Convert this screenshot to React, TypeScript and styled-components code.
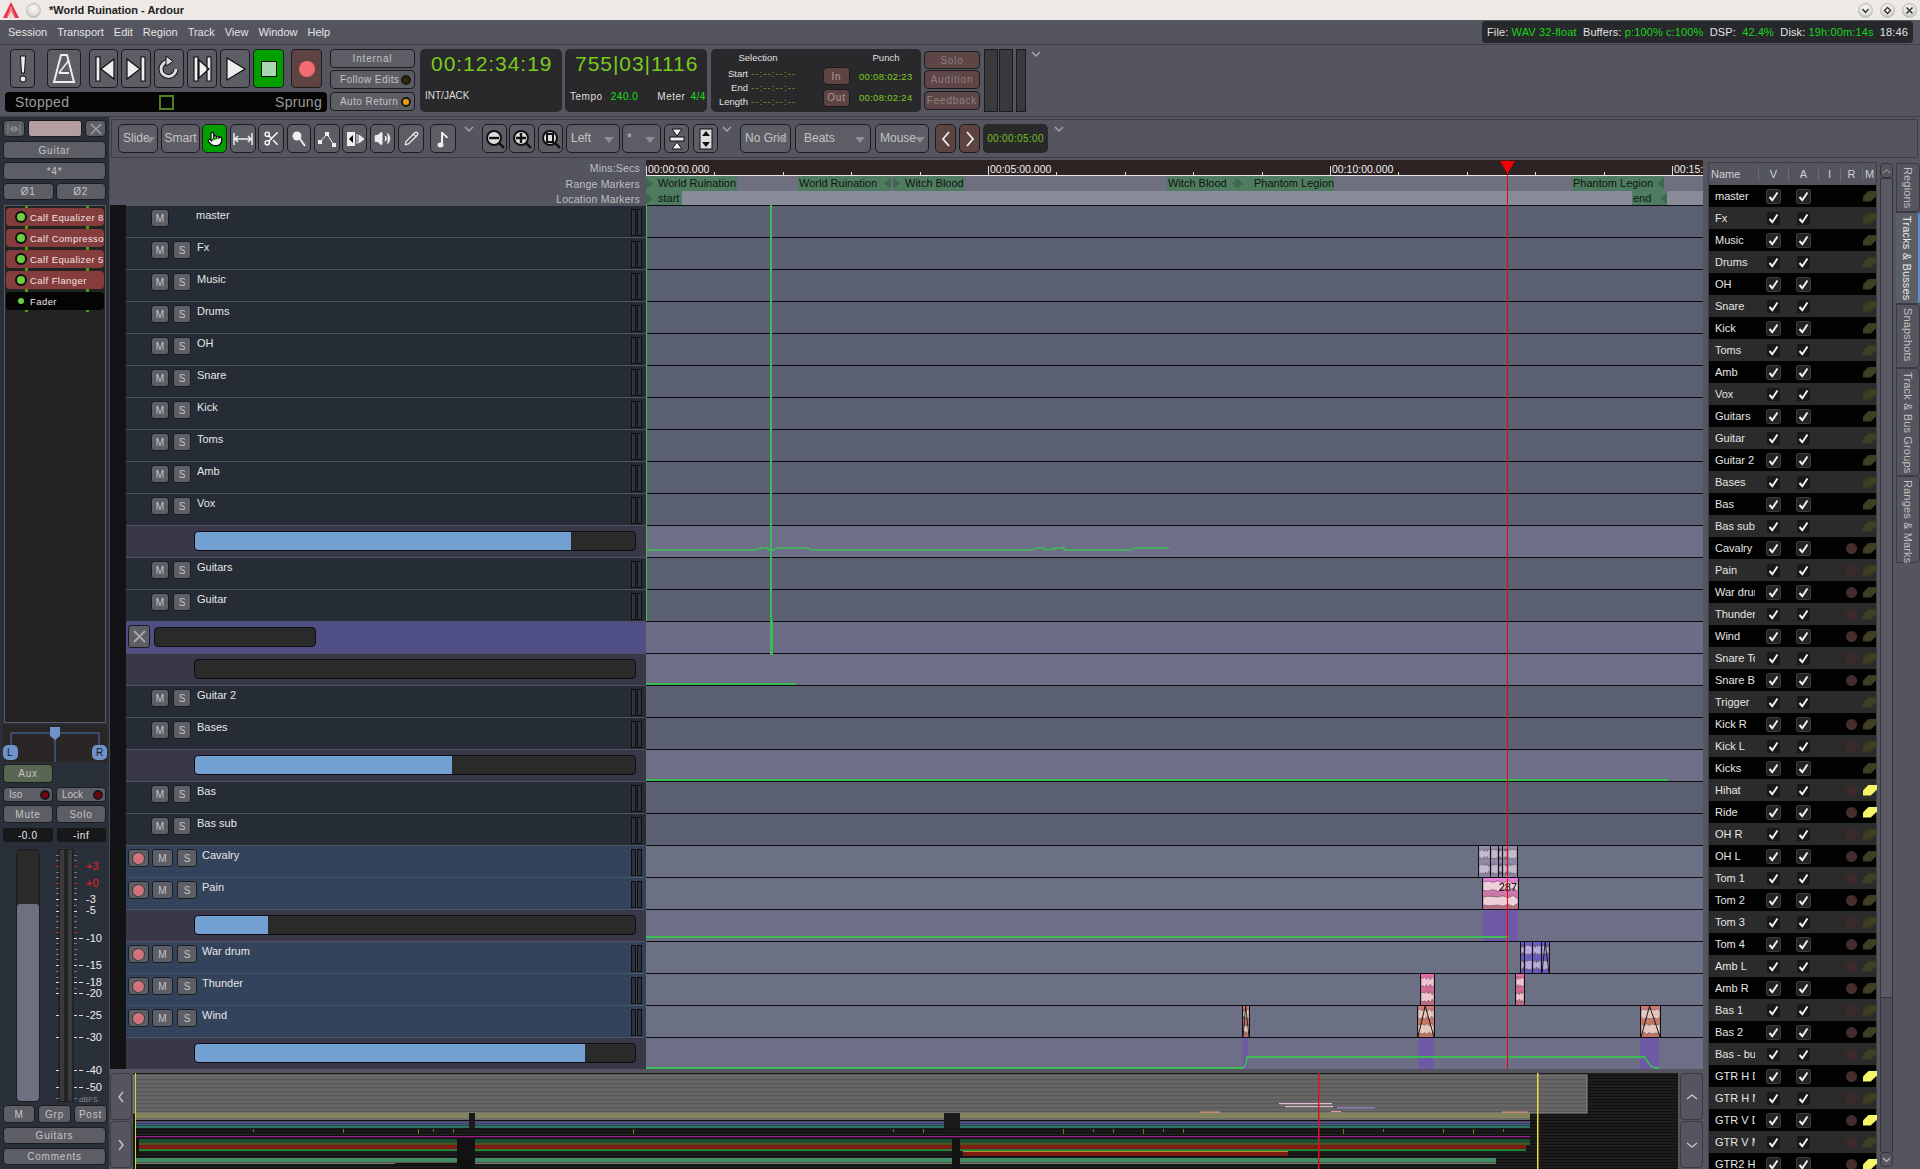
import React from 'react';
import styled, { createGlobalStyle, css } from 'styled-components';
import { Pointer, Scissors, Volume2, Pencil } from 'lucide-react';

const Global = createGlobalStyle`
  html, body { margin: 0; padding: 0; background: #54555f; overflow: hidden; }
  * { box-sizing: border-box; }
  #root { width: 1920px; height: 1169px; }
`;

const Page = styled.div`
  width: 1920px; height: 1169px; overflow: hidden; background: #54555f;
  display: grid; grid-template-rows: 20px 24px 73px 1052px;
  font: 11px/13px "Liberation Sans", Arial, sans-serif; color: #d8d8d8;
`;

/* title bar */
const TitleBar = styled.div`
  background: #ece9e6; display: flex; align-items: center; padding: 0 3px 0 2px; color: #222;
`;
const TitleText = styled.span`font-weight: bold; margin-left: 8px; flex: 1;`;
const WinBtn = styled.span<{ $first?: boolean }>`
  width: 15px; height: 15px; border-radius: 50%; margin-left: ${p => p.$first ? 6 : 7}px; display: flex; align-items: center; justify-content: center;
  background: radial-gradient(circle at 50% 35%, #fafafa 0, #e0dfdc 55%, #a9a8a5 100%); border: 1px solid #bdbcb8;
`;

/* menu */
const MenuBar = styled.div`
  display: flex; align-items: center; padding: 0 7px 0 8px; position: relative; color: #e4e4e4;
  & > span { margin-right: 10px; }
`;
const Status = styled.div`
  margin-left: auto; width: 431px; height: 22px; background: #26282b; border-radius: 4px;
  display: flex; align-items: center; justify-content: space-between; padding: 0 5px; color: #e2e2e2; letter-spacing: .12px;
`;
const Ok = styled.b`font-weight: normal; color: #19d419;`;

/* generic button */
const Btn = styled.div<{ $w?: number; $h?: number; $bg?: string; $c?: string; $ml?: number; $mt?: number }>`
  flex: none;
  ${p => p.$w ? css`width: ${p.$w}px;` : ''}
  height: ${p => p.$h ?? 18}px;
  ${p => p.$ml ? css`margin-left: ${p.$ml}px;` : ''}
  ${p => p.$mt ? css`margin-top: ${p.$mt}px;` : ''}
  background: ${p => p.$bg ?? '#5c5d65'};
  color: ${p => p.$c ?? '#c4c4c4'};
  border: 1px solid #1c1c1f; border-radius: 4px;
  display: flex; align-items: center; justify-content: center;
  font-size: 10px; letter-spacing: .8px; white-space: nowrap;
`;

/* transport */
const Transport = styled.div`
  border-top: 1px solid #3d3e46; border-bottom: 1px solid #3d3e46; display: flex; padding: 4px 0 0 5px; height: 73px;
`;
const TransportCol = styled.div`width: 322px; display: flex; flex-direction: column; gap: 4px;`;
const TransportRow = styled.div`display: flex; gap: 3px; padding-left: 5px; height: 39px;`;
const ButtonStack = styled.div<{ $w: number; $ml: number }>`
  width: ${p => p.$w}px; margin-left: ${p => p.$ml}px; display: flex; flex-direction: column; flex: none;
`;
const LedBtn = styled(Btn)`justify-content: space-between; padding: 0 3px 0 9px; letter-spacing: .45px;`;
const SmallLedBtn = styled(LedBtn)`padding: 0 2px 0 5px; letter-spacing: 0;`;
const Led = styled.i<{ $on?: string }>`
  width: 10px; height: 10px; border-radius: 50%; background: ${p => p.$on}; border: 2px solid #1a1a1a; display: block;
`;
const StatusStrip = styled.div`
  height: 20px; background: #040404; border-radius: 4px; display: flex; align-items: center; padding: 0 5px 0 10px;
  color: #9c9c9c; font-size: 14px; letter-spacing: .3px;
`;
const SyncBox = styled.i`width: 15px; height: 15px; border: 2px solid #4f7f1e; margin-left: 90px; display: block;`;
const Sprung = styled.span`margin-left: auto;`;
const ClockPanel = styled.div<{ $w: number; $ml: number }>`
  width: ${p => p.$w}px; margin-left: ${p => p.$ml}px; height: 63px; flex: none; background: #29292b; border-radius: 5px;
  padding: 2px 0 0 5px; color: #dedede; font-size: 10px; letter-spacing: .5px;
`;
const ClockDigits = styled.div<{ $pl: number }>`
  font-size: 21px; line-height: 26px; letter-spacing: .95px; color: #7bc91f; padding-left: ${p => p.$pl}px; height: 38px;
`;
const SyncLabel = styled.div`font-size: 10px; letter-spacing: 0;`;
const Green = styled.span`color: #18e018; font-size: 10px;`;
const MeterLine = styled.div`display: flex; gap: 5px; align-items: center; height: 14px;`;
const MeterWord = styled.span`margin-left: 14px;`;
const SelectionPanel = styled.div`
  width: 210px; margin-left: 4px; height: 63px; flex: none; background: #29292b; border-radius: 5px; color: #e0e0e0; font-size: 9.5px;
  display: grid; grid-template-columns: 37px 57px 18px 28px 8px auto; grid-template-rows: 17px 14px 14px 15px;
  align-items: center;
`;
const SelTitle = styled.div<{ $col: string; $pr?: number }>`grid-column: ${p => p.$col}; grid-row: 1; text-align: center; font-size: 9.5px; padding-right: ${p => p.$pr ?? 0}px;`;
const SelLabel = styled.div<{ $row: number }>`grid-column: 1; grid-row: ${p => p.$row}; text-align: right;`;
const SelDash = styled.div<{ $row: number }>`grid-column: 2; grid-row: ${p => p.$row}; color: #6fa520; padding-left: 3px; letter-spacing: 1.1px; font-size: 9.5px;`;
const PunchCell = styled.div<{ $row: string }>`grid-column: 4; grid-row: ${p => p.$row}; padding-top: 6px;`;
const PunchVal = styled.div<{ $row: string }>`grid-column: 6; grid-row: ${p => p.$row}; padding-top: 6px; color: #7bc91f; font-size: 9.5px; letter-spacing: .3px;`;
const MeterBar = styled.i<{ $w: number; $ml: number }>`
  width: ${p => p.$w}px; margin-left: ${p => p.$ml}px; height: 63px; background: #3a3a3d; border: 1px solid #1b1b1d; display: block; flex: none;
`;
const Chevron = styled.svg<{ $ml: number }>`width: 10px; height: 6px; margin: 2px 0 0 ${p => p.$ml}px; flex: none;`;
const Chev = ({ ml }: { ml: number }) => (
  <Chevron $ml={ml} viewBox="0 0 10 6"><path d="M1 1 L5 5 L9 1" fill="none" stroke="#a8a8a8" strokeWidth="1.4" /></Chevron>
);

/* body */
const Body = styled.div`display: grid; grid-template-columns: 110px 1810px; height: 1052px;`;
const Strip = styled.div`
  background: #2a303a; padding: 3px 3px 0 3px; display: flex; flex-direction: column; width: 110px; border-right: 1px solid #484a52; height: 1052px;
`;
const StripRow = styled.div<{ $h: number; $mt: number; $gap?: number }>`
  display: flex; gap: ${p => p.$gap ?? 2}px; height: ${p => p.$h}px; margin-top: ${p => p.$mt}px; flex: none;
`;
const StripBtn = styled(Btn)`flex: 1;`;
const Swatch = styled.div`width: 54px; height: 17px; background: #b49ea2; border-radius: 3px; border: 1px solid #1c1c1f; margin-left: 1px; flex: none;`;
const ProcBox = styled.div`
  height: 518px; margin: 5px 0 0 1px; width: 102px; background: #232323; border: 1px solid #5a5b63; padding: 2px 1px; display: flex; flex-direction: column; gap: 3px; flex: none;
`;
const Proc = styled.div<{ $fader?: boolean }>`
  height: 18px; border-radius: 4px; background: ${p => p.$fader ? '#040404' : '#853c3c'}; color: #f0e4e4; display: flex; align-items: center;
  padding-left: 11px; font-size: 9.5px; letter-spacing: .42px; white-space: nowrap; position: relative;
  &::before, &::after { content: ''; position: absolute; left: 19px; width: 3px; height: 2px; background: #4f9a14; box-shadow: 61px 0 0 #4f9a14; }
  &::before { top: -2px; }
  &::after { bottom: -2px; }
`;
const ProcText = styled.span`width: 74px; overflow: hidden; display: block; margin-left: 5px;`;
const ProcLed = styled.i<{ $small?: boolean }>`
  width: ${p => p.$small ? 6 : 8}px; height: ${p => p.$small ? 6 : 8}px; margin: 0 ${p => p.$small ? 1 : 0}px; border-radius: 50%; background: #6ccf3d;
  ${p => p.$small ? '' : 'box-shadow: 0 0 0 2px #101010;'} flex: none; display: block;
`;
const PanBox = styled.svg`width: 104px; height: 37px; margin-top: 2px; background: #2a2626; flex: none; display: block;`;
const Gain = styled.div`flex: 1; background: #17181a; color: #e8e8e8; font-size: 10px; display: flex; align-items: center; justify-content: center; border-radius: 2px; letter-spacing: .6px;`;
const FaderArea = styled.div`display: flex; height: 253px; margin-top: 7px; flex: none;`;
const Fader = styled.div`
  width: 24px; margin-left: 13px; background: #2a2a2b; border: 1px solid #1c1c1f; border-radius: 5px; display: flex; align-items: flex-end; flex: none; overflow: hidden;
`;
const FaderFill = styled.div`width: 100%; height: 197px; background: #6e7082; border-radius: 3px 3px 0 0;`;
const ScaleBox = styled.svg`width: 67px; height: 253px; flex: none; display: block;`;

/* main */
const Main = styled.div`display: flex; flex-direction: column; width: 1810px;`;
const ToolBar = styled.div`
  margin: 2px 2px 0 1px; height: 39px; border: 1px solid #3c3d45; padding: 4px 0 0 6px; display: flex; flex: none;
`;
const Tool = styled(Btn)`font-size: 12px; letter-spacing: 0; height: 29px; border-radius: 5px;`;
const Drop = styled(Tool)<{ $pl?: number }>`justify-content: flex-start; padding-left: ${p => p.$pl ?? 4}px; position: relative;`;
const Caret = styled.i<{ $r?: number }>`
  position: absolute; right: ${p => p.$r ?? 5}px; top: 12px; width: 0; height: 0; border-left: 5px solid transparent; border-right: 5px solid transparent; border-top: 6px solid #8d8e96;
`;
const ToolClock = styled.div`
  width: 65px; height: 29px; margin-left: 3px; background: #29292b; border-radius: 5px; display: flex; align-items: center; justify-content: center;
  color: #74c01e; font-size: 10px; letter-spacing: .35px; flex: none;
`;

const Editor = styled.div`
  display: grid; grid-template-columns: 1596px 214px; margin-top: 2px; height: 1010px; position: relative;
`;
const Center = styled.div`display: flex; flex-direction: column; width: 1596px; height: 1010px;`;
const RulerRow = styled.div<{ $h: number }>`display: grid; grid-template-columns: 536px 1057px; height: ${p => p.$h}px; flex: none;`;
const RulerLabel = styled.div`text-align: right; padding-right: 6px; color: #bfc0c4; font-size: 10.5px; letter-spacing: .2px; line-height: 16px;`;
const RulerBand = styled.div<{ $bg: string; $line: string }>`
  background: ${p => p.$bg}; border-bottom: 1px solid ${p => p.$line}; position: relative; overflow: hidden;
`;
const Major = styled.span<{ $x: number }>`
  position: absolute; left: ${p => p.$x}px; bottom: 0; height: 9px; border-left: 1px solid #ddd; padding-left: 1px; line-height: 9px;
  color: #eee; font-size: 10.5px; white-space: nowrap;
`;
const MajorText = styled.span`position: relative; top: -1px;`;
const Minor = styled.i<{ $x: number }>`position: absolute; left: ${p => p.$x}px; bottom: 0; height: 3px; width: 1px; background: #ddd;`;
const Marker = styled.div<{ $x: number; $w: number; $end?: boolean; $pl?: number }>`
  position: absolute; left: ${p => p.$x}px; width: ${p => p.$w}px; top: 0; bottom: 0; background: #4f7b60; color: #101510; font-size: 11px;
  padding-left: ${p => p.$pl ?? (p.$end ? 1 : 12)}px; line-height: 15px; white-space: nowrap; overflow: hidden;
  &::after {
    content: ''; position: absolute; top: 2px; bottom: 2px; width: 7px; background: #3d6850;
    ${p => p.$end ? 'right: 0; clip-path: polygon(100% 0, 0 50%, 100% 100%);' : 'left: 0; clip-path: polygon(0 0, 100% 50%, 0 100%);'}
  }
`;

const Tracks = styled.div`display: flex; flex-direction: column; height: 864px; flex: none;`;
const tone: Record<string, [string, string]> = {
  bus: ['#252c36', '#5b6172'],
  audio: ['#32435b', '#6b7084'],
  auto: ['#383848', '#6d6f87'],
  sel: ['#4f4f85', '#6b6c85'],
};
const TrackRow = styled.div`display: grid; grid-template-columns: 16px 520px 1057px; height: 32px; flex: none;`;
const Gutter = styled.div`background: #131315;`;
const Head = styled.div<{ $k: string }>`
  background: ${p => tone[p.$k][0]}; border-top: 1px solid #4e5360; display: flex; align-items: flex-start; padding-top: 3px; padding-left: ${p => (p.$k === 'bus' ? 25 : 2)}px;
`;
const TrackBtn = styled(Btn)`font-size: 10px; letter-spacing: 0; background: #5d5e66; border-radius: 3px;`;
const RecDot = styled.i`width: 11px; height: 11px; border-radius: 50%; background: #d0747c; box-shadow: 0 0 0 1px #3f3f46; display: block;`;
const Spacer = styled.i<{ $w: number; $ml: number }>`width: ${p => p.$w}px; margin-left: ${p => p.$ml}px; flex: none; display: block;`;
const TrackName = styled.span<{ $ml: number }>`margin-left: ${p => p.$ml}px; color: #e6e6e6; font-size: 11px;`;
const TrackMeters = styled.div`margin-left: auto; margin-right: 4px; display: flex; gap: 1px;`;
const MiniMeter = styled.i`width: 5px; height: 27px; background: #30333a; border: 1px solid #0e0e10; display: block;`;
const GainSlider = styled.div`
  margin: 2px 0 0 66px; width: 442px; height: 20px; border: 1px solid #0e0e10; border-radius: 4px; background: #2a2a2b; overflow: hidden;
`;
const GainFill = styled.div`height: 100%; background: #72a0d2; border-radius: 3px 0 0 3px;`;
const NameBox = styled.div`width: 162px; height: 20px; background: #2a2a2b; border: 1px solid #0e0e10; border-radius: 4px; margin: 2px 0 0 4px;`;
const Lane = styled.div<{ $k: string }>`
  position: relative; background: ${p => tone[p.$k][1]}; border-top: 1px solid #0c0c10; overflow: hidden;
`;
const AutoSvg = styled.svg`position: absolute; left: 0; top: -1px; width: 1057px; height: 32px; display: block; z-index: 2;`;
const Shade = styled.i<{ $x: number; $w: number }>`
  position: absolute; left: ${p => p.$x}px; width: ${p => p.$w}px; top: 0; bottom: 0; background: #6f58a4; display: block;
`;
const RegionBox = styled.div<{ $x: number; $w: number; $a: string; $b: string }>`
  position: absolute; left: ${p => p.$x}px; width: ${p => p.$w}px; top: 0; bottom: 0; border-left: 1px solid #101014; border-right: 1px solid #101014;
  background: linear-gradient(${p => p.$a}, ${p => p.$b}); overflow: hidden;
`;
const WaveSvg = styled.svg`width: 100%; height: 100%; display: block;`;
const RegionNum = styled.span`position: absolute; right: 1px; top: 3px; color: #000; font-size: 11px;`;
const Playhead = styled.div`
  position: absolute; left: 1397px; top: 0; height: 909px; width: 1px; background: #f00000; z-index: 5;
  &::before { content: ''; position: absolute; left: -7px; top: 1px; width: 15px; height: 13px; background: #f00000; clip-path: polygon(0 0, 100% 0, 50% 100%); }
`;
const GreenLine = styled.i<{ $x: number; $top: number; $h: number; $w?: number }>`
  position: absolute; left: ${p => p.$x}px; top: ${p => p.$top}px; height: ${p => p.$h}px; width: ${p => p.$w ?? 1}px; background: #3dbb55; z-index: 3; display: block;
`;

const SummaryRow = styled.div`display: flex; height: 100px; padding-top: 4px; flex: none; align-items: flex-start;`;
const ArrowStack = styled.div<{ $w: number; $ml: number }>`width: ${p => p.$w}px; margin-left: ${p => p.$ml}px; display: flex; flex-direction: column; gap: 1px; flex: none;`;
const ArrowBtn = styled.div`
  height: 47px; background: #54555f; border: 1px solid #3a3b43; border-radius: 4px; display: flex; align-items: center; justify-content: center; color: #b8b8b8;
`;
const SummarySvg = styled.svg`width: 1545px; height: 96px; margin-left: 1px; flex: none; display: block; background: #111;`;

/* right panel */
const Side = styled.div`display: flex; padding: 3px 0 0 3px; height: 1010px; overflow: hidden; position: relative;`;
const RouteList = styled.div`width: 167px; flex: none; display: flex; flex-direction: column; box-shadow: 0 0 0 1px #3e3f47;`;
const cols = css`display: grid; grid-template-columns: 49px 30px 30px 22px 22px 14px; align-items: center;`;
const RouteHead = styled.div`${cols} height: 22px; background: #54555f; color: #d0d0d0; flex: none; & > span { text-align: center; border-left: 1px solid #6b6c74; line-height: 14px; }`;
const HeadName = styled.div`padding-left: 2px; font-size: 11px;`;
const RouteRow = styled.div<{ $odd: boolean }>`
  ${cols} height: 22px; flex: none; background: ${p => p.$odd ? '#2b2b2c' : '#020202'};
`;
const RouteName = styled.div`padding-left: 6px; width: 46px; overflow: hidden; white-space: nowrap; color: #e6e6e6; font-size: 11px;`;
const CheckCell = styled.div<{ $odd: boolean }>`
  width: 13px; height: 13px; justify-self: center; border-radius: 2px; background: ${p => p.$odd ? '#181818' : '#232323'};
  ${p => p.$odd ? '' : 'box-shadow: 0 0 0 1px #3e3e3e;'} display: flex; align-items: center; justify-content: center;
`;
const RDot = styled.i<{ $odd: boolean }>`width: 11px; height: 11px; border-radius: 50%; background: ${p => p.$odd ? '#3d2b2c' : '#452d2d'}; justify-self: center; display: block;`;
const MPill = styled.i<{ $on: boolean }>`
  width: 14px; height: 11px; display: block; justify-self: start; margin-left: 1px;
  background: ${p => p.$on ? '#f6f56a' : '#3e3e22'}; clip-path: polygon(42% 0, 100% 0, 100% 45%, 55% 100%, 0 100%, 0 55%);
`;
const Scroll = styled.div`width: 13px; margin: 0 0 0 4px; flex: none; display: flex; flex-direction: column; height: 1004px;`;
const ScrollEnd = styled.div`height: 15px; background: #54555f; border: 1px solid #34353c; border-radius: 4px; display: flex; align-items: center; justify-content: center; flex: none;`;
const ScrollThumb = styled.div`height: 820px; background: #595a63; border: 1px solid #34353c; flex: none;`;
const ScrollRest = styled.div`flex: 1; background: #4e4f58; border-left: 1px solid #34353c; border-right: 1px solid #34353c;`;
const Tabs = styled.div`display: flex; flex-direction: column; margin-left: 3px; width: 24px; flex: none;`;
const TabItem = styled.div<{ $h: number; $active?: boolean }>`
  height: ${p => p.$h}px; writing-mode: vertical-rl; background: ${p => p.$active ? '#5c5d66' : '#54555f'};
  border: 1px solid #3a3b43; border-left: ${p => p.$active ? 'none' : '1px solid #3a3b43'}; border-right: ${p => p.$active ? '2px solid #5a90d0' : '1px solid #3a3b43'};
  border-radius: 0 4px 4px 0; color: ${p => p.$active ? '#e8e8e8' : '#c0c0c0'}; padding: 3px 3px 0 0; line-height: 17px; font-size: 11px; white-space: nowrap; flex: none; letter-spacing: .15px;
`;

/* icons */
const Ico = ({ d, w = 20, h = 24, children }: { d?: string; w?: number; h?: number; children?: React.ReactNode }) => (
  <svg width={w} height={h} viewBox={`0 0 ${w} ${h}`}>
    {d && <path d={d} fill="#eee" stroke="#111" strokeWidth="1.2" />}
    {children}
  </svg>
);
const LOGO = (
  <svg width="18" height="18" viewBox="0 0 18 18">
    <path d="M9 1 L17 17 L12.5 17 L9 9 L5.5 17 L1 17 Z" fill="#e8304a" />
    <path d="M9 6 L13 17 M9 6 L5 17 M9 6 V17" stroke="#f7a0a8" strokeWidth=".7" />
  </svg>
);

const blob = (cy: number, amp: number, seed: number, w: number) => {
  const n = 7; const up: string[] = []; const dn: string[] = [];
  for (let i = 0; i <= n; i++) {
    const x = (i / n) * w;
    const a = amp * (0.35 + 0.65 * Math.abs(Math.sin(i * 1.7 + seed)));
    up.push(`${x.toFixed(1)},${(cy - a).toFixed(1)}`);
    dn.unshift(`${x.toFixed(1)},${(cy + a).toFixed(1)}`);
  }
  return up.concat(dn).join(' ');
};
const Region = ({ x, w, a, b, fill, fade, seed, num }: { x: number; w: number; a: string; b: string; fill: string; fade?: boolean; seed: number; num?: string }) => (
  <RegionBox $x={x} $w={w} $a={a} $b={b}>
    <WaveSvg viewBox={`0 0 ${w} 31`} preserveAspectRatio="none">
      <polygon points={blob(8, 5.5, seed, w)} fill={fill} stroke="#5a3a4a" strokeWidth=".5" />
      <polygon points={blob(23, 5.5, seed + 1.3, w)} fill={fill} stroke="#5a3a4a" strokeWidth=".5" />
      {fade && <path d={`M0 31 L${w * 0.45} 0 L${w} 31`} fill="none" stroke="#111" strokeWidth="1" />}
    </WaveSvg>
    {num && <RegionNum>{num}</RegionNum>}
  </RegionBox>
);

const CAV = { a: '#928da8', b: '#8a86a2', fill: '#c0bcce' };
const PAIN = { a: '#e682dc', b: '#b0707c', fill: '#eed0da' };
const WAR = { a: '#6c5ccc', b: '#6458b8', fill: '#b4aee0' };
const THU = { a: '#e86ca8', b: '#c06a80', fill: '#eec4d0' };
const WIN = { a: '#cc7c6c', b: '#bc7464', fill: '#e4c8c0' };

type Row = { n?: string; k: 'bus' | 'audio' | 'auto' | 'sel'; fill?: number; noS?: boolean; lane?: React.ReactNode };
const rows: Row[] = [
  { n: 'master', k: 'bus', noS: true },
  { n: 'Fx', k: 'bus' }, { n: 'Music', k: 'bus' }, { n: 'Drums', k: 'bus' }, { n: 'OH', k: 'bus' }, { n: 'Snare', k: 'bus' },
  { n: 'Kick', k: 'bus' }, { n: 'Toms', k: 'bus' }, { n: 'Amb', k: 'bus' }, { n: 'Vox', k: 'bus' },
  { k: 'auto', fill: 376, lane: <AutoSvg><path d="M0 25 H110 L114 23 H122 V25 H128 L132 23 H162 L165 25 H386 L390 23 H398 V24.5 H408 V23 H418 V25 H486 L488 23 H523" fill="none" stroke="#3dbb55" strokeWidth="1.6" /></AutoSvg> },
  { n: 'Guitars', k: 'bus' }, { n: 'Guitar', k: 'bus' },
  { k: 'sel' },
  { k: 'auto', fill: 0, lane: <AutoSvg><path d="M0 31 H150" stroke="#3dbb55" strokeWidth="2" /></AutoSvg> },
  { n: 'Guitar 2', k: 'bus' }, { n: 'Bases', k: 'bus' },
  { k: 'auto', fill: 257, lane: <AutoSvg><path d="M0 31 H1022" stroke="#3dbb55" strokeWidth="2" /></AutoSvg> },
  { n: 'Bas', k: 'bus' }, { n: 'Bas sub', k: 'bus' },
  { n: 'Cavalry', k: 'audio', lane: <>
    <Region x={832} w={13} seed={1} {...CAV} /><Region x={844} w={9} seed={2} {...CAV} /><Region x={852} w={5} seed={3} {...CAV} /><Region x={856} w={6} seed={4} {...CAV} /><Region x={861} w={11} seed={5} {...CAV} />
  </> },
  { n: 'Pain', k: 'audio', lane: <Region x={836} w={37} seed={2.4} num="287" {...PAIN} /> },
  { k: 'auto', fill: 73, lane: <>
    <Shade $x={837} $w={35} />
    <AutoSvg><path d="M0 28 H863" stroke="#3dbb55" strokeWidth="2" /></AutoSvg>
  </> },
  { n: 'War drum', k: 'audio', lane: <>
    <Region x={874} w={5} seed={1} {...WAR} /><Region x={878} w={9} seed={2} {...WAR} /><Region x={886} w={10} seed={3} {...WAR} /><Region x={895} w={9} fade seed={4} {...WAR} />
  </> },
  { n: 'Thunder', k: 'audio', lane: <><Region x={774} w={15} seed={1} {...THU} /><Region x={869} w={10} seed={3} {...THU} /></> },
  { n: 'Wind', k: 'audio', lane: <>
    <Region x={596} w={8} seed={1.5} fade {...WIN} /><Region x={771} w={18} seed={2.5} fade {...WIN} /><Region x={994} w={21} seed={3.5} fade {...WIN} />
  </> },
  { k: 'auto', fill: 390, lane: <>
    <Shade $x={597} $w={5} /><Shade $x={772} $w={16} /><Shade $x={994} $w={19} />
    <AutoSvg><path d="M0 31 H597 Q600 31 601 20 H999 Q1004 31 1010 31 H1013" fill="none" stroke="#3dbb55" strokeWidth="1.8" /></AutoSvg>
  </> },
];

const routeNames = ['master','Fx','Music','Drums','OH','Snare','Kick','Toms','Amb','Vox','Guitars','Guitar','Guitar 2','Bases','Bas','Bas sub','Cavalry','Pain','War drum','Thunder','Wind','Snare Top','Snare Bot','Trigger','Kick R','Kick L','Kicks','Hihat','Ride','OH R','OH L','Tom 1','Tom 2','Tom 3','Tom 4','Amb L','Amb R','Bas 1','Bas 2','Bas - bus','GTR H D','GTR H M','GTR V D','GTR V M','GTR2 H'];
const hasR = (i: number) => i >= 16 && i !== 23 && i !== 26;
const yellow = ['Hihat', 'Ride', 'GTR H D', 'GTR V D', 'GTR2 H'];

const checkIcon = <svg width="11" height="11" viewBox="0 0 11 11"><path d="M1.5 6 L4.3 9.2 L9.5 1.5" fill="none" stroke="#f2f2f2" strokeWidth="2" /></svg>;

const leftTicks = [855, 860, 866, 872, 877, 883, 888, 893, 899, 905, 911, 916, 921, 927, 932, 938, 943, 949, 954, 959, 965, 971, 977, 982, 988, 993, 1015, 1037, 1070, 1087, 1098];
const redT = [866, 883, 932];
const whiteT = [899, 911, 938, 965, 982, 993, 1015, 1037, 1070, 1087];
const labels: [number, string, string][] = [[866, '+3', '#f02020'], [883, '+0', '#f02020'], [899, '-3', '#eee'], [910, '-5', '#eee'], [938, '-10', '#eee'], [965, '-15', '#eee'], [982, '-18', '#eee'], [993, '-20', '#eee'], [1015, '-25', '#eee'], [1037, '-30', '#eee'], [1070, '-40', '#eee'], [1087, '-50', '#eee']];

const ScaleSvg = () => (
  <ScaleBox viewBox="0 0 67 253">
    <rect x="19" y="0" width="6" height="253" fill="#3a3a3d" stroke="#111" />
    <rect x="27" y="0" width="6" height="253" fill="#3a3a3d" stroke="#111" />
    {leftTicks.map(t => {
      const y = t - 849; const red = redT.includes(t); const wh = whiteT.includes(t);
      const c = red ? '#e02020' : wh ? '#ddd' : '#777';
      return <g key={t}><rect x="16" y={y} width="3" height="1" fill={c} /><rect x="34" y={y} width="3" height="1" fill={c} />{wh && t > 911 && <rect x="39" y={y} width="4" height="1" fill="#ddd" />}</g>;
    })}
    {labels.map(([y, t, c]) => <text key={t} x="46" y={y - 849 + 4} fill={c} fontSize="11" fontFamily="Liberation Sans">{t}</text>)}
    <text x="39" y="253" fill="#888" fontSize="7.5" fontFamily="Liberation Sans">dBFS</text>
  </ScaleBox>
);

const PanSvg = () => (
  <PanBox viewBox="0 0 104 37">
    <path d="M52 10 V37 M8 8 H96 M8 8 V22 M96 8 V22" stroke="#3f5a80" strokeWidth="1.6" fill="none" />
    <path d="M47 2 H57 V11 L52 15 L47 11 Z" fill="#6f93c8" />
    <rect x="0" y="20" width="15" height="15" rx="5" fill="#6f93c8" />
    <rect x="89" y="20" width="15" height="15" rx="5" fill="#6f93c8" />
    <text x="4" y="31" fontSize="10" fill="#101820" fontFamily="Liberation Sans">L</text>
    <text x="93" y="31" fontSize="10" fill="#101820" fontFamily="Liberation Sans">R</text>
  </PanBox>
);

const sumLines: [number, number, number, string][] = [
  [40, 5, 1394, '#84855a'], [45.5, 1, 1394, '#bdbdbd'], [48.5, 1.2, 1394, '#7f6eb2'], [50.5, 1.2, 1394, '#5878b4'], [52.5, 2.4, 1394, '#2f7c6c'],
  [63, 1.2, 1394, '#a01a8c'], [66, 4, 1394, '#1a4c36'], [70.5, 1, 1394, '#8b8a2c'], [72, 4.5, 1390, '#7c1c12'], [76.5, 1.2, 1390, '#20c44a'],
];
const SummaryMap = () => (
  <SummarySvg viewBox="0 0 1545 96">
    <defs>
      <pattern id="lit" width="4" height="4" patternUnits="userSpaceOnUse"><rect width="4" height="4" fill="#666666" /><rect y="2" width="4" height="1.2" fill="#575757" /></pattern>
      <pattern id="dk" width="4" height="3" patternUnits="userSpaceOnUse"><rect width="4" height="3" fill="#1d1d1d" /><rect y="2" width="4" height="1" fill="#101010" /></pattern>
    </defs>
    <rect width="1545" height="96" fill="url(#dk)" />
    <rect x="0" y="2" width="1454" height="38" fill="url(#lit)" stroke="#8a8a8a" />
    <rect x="1146" y="30" width="53" height="1.2" fill="#e8b8d8" />
    <rect x="1152" y="33" width="48" height="1.2" fill="#e0b8d0" />
    <rect x="1198" y="38" width="10" height="1.2" fill="#e09aa0" />
    <rect x="1204" y="34" width="38" height="1.6" fill="#8a78b0" />
    <rect x="1369" y="38.5" width="26" height="1.2" fill="#e89880" />
    <rect x="1067" y="38.5" width="20" height="1.2" fill="#e89880" />
    {sumLines.map(([y, h, w, c], i) => <rect key={i} x="3" y={y} width={w} height={h} fill={c} />)}
    <rect x="3" y="85" width="1360" height="4" fill="#408a62" />
    <rect x="3" y="89.5" width="1360" height="1.2" fill="#9aa28a" />
    <rect x="830" y="79" width="325" height="4" fill="#7c1c12" />
    <rect x="830" y="78" width="325" height="1" fill="#b88a30" />
    {[120, 210, 285, 300, 320, 500, 760, 790, 930, 960, 980, 1010, 1030, 1050, 1210, 1250, 1310, 1340, 1370].map((x, i) => <rect key={i} x={x} y={56} width="1" height={3 + (i % 3)} fill="#6a7a20" />)}
    <rect x="336" y="40" width="6" height="16" fill="#1a1a1a" />
    <rect x="324" y="65" width="18" height="30" fill="#121212" />
    <rect x="811" y="40" width="16" height="16" fill="#1a1a1a" />
    <rect x="819" y="65" width="8" height="30" fill="#121212" />
    <rect x="2" y="66" width="4" height="14" fill="#121212" />
    <rect x="262" y="90" width="80" height="1.5" fill="#111" />
    <rect x="2" width="1" height="96" fill="#d8d050" />
    <rect x="1185" width="1.5" height="96" fill="#d81818" />
    <rect x="1404" width="1.5" height="96" fill="#e8e040" />
  </SummarySvg>
);

const majors = [[0, '00:00:00.000'], [342, '00:05:00.000'], [684, '00:10:00.000'], [1026, '00:15:00.000']] as const;
const minors = Array.from({ length: 16 }, (_, i) => i * 68.4).filter((_, i) => i % 5 !== 0);

const tabs: [string, number, boolean?][] = [['Regions', 49], ['Tracks & Busses', 92, true], ['Snapshots', 64], ['Track & Bus Groups', 108], ['Ranges & Marks', 87]];

export default function App() {
  return (
    <Page>
      <Global />
      <TitleBar>
        {LOGO}
        <WinBtn $first />
        <TitleText>*World Ruination - Ardour</TitleText>
        <WinBtn><svg width="9" height="9" viewBox="0 0 9 9"><path d="M1.5 3 L4.5 6.5 L7.5 3" fill="none" stroke="#333" strokeWidth="1.4" /></svg></WinBtn>
        <WinBtn><svg width="9" height="9" viewBox="0 0 9 9"><path d="M4.5 1.5 L7.5 4.5 L4.5 7.5 L1.5 4.5 Z" fill="none" stroke="#333" strokeWidth="1.4" /></svg></WinBtn>
        <WinBtn><svg width="9" height="9" viewBox="0 0 9 9"><path d="M1.5 1.5 L7.5 7.5 M7.5 1.5 L1.5 7.5" stroke="#333" strokeWidth="1.5" /></svg></WinBtn>
      </TitleBar>
      <MenuBar>
        {['Session', 'Transport', 'Edit', 'Region', 'Track', 'View', 'Window', 'Help'].map(m => <span key={m}>{m}</span>)}
        <Status>
          <div>File: <Ok>WAV 32-float</Ok></div>
          <div>Buffers: <Ok>p:100% c:100%</Ok></div>
          <div>DSP: &nbsp;<Ok>42.4%</Ok></div>
          <div>Disk: <Ok>19h:00m:14s</Ok></div>
          <div>18:46</div>
        </Status>
      </MenuBar>

      <Transport>
        <TransportCol>
          <TransportRow>
            <Btn $w={25} $h={39}><Ico w={12} h={28}><path d="M3.5 1 H8.5 L7.5 18 H4.5 Z" fill="#eee" stroke="#111" /><circle cx="6" cy="24" r="3" fill="#eee" stroke="#111" /></Ico></Btn>
            <Btn $w={34} $h={39} $ml={9}><Ico w={26} h={32}><path d="M10 2 H16 L23 29 H3 Z M8 20 H18" fill="none" stroke="#eee" strokeWidth="2" /><path d="M8 20 L18 7" stroke="#eee" strokeWidth="1.6" /></Ico></Btn>
            <Btn $w={29} $h={39} $ml={5}><Ico d="M5 4 H9 V28 H5 Z M23 6 L10 16 L23 26 Z" w={26} h={32} /></Btn>
            <Btn $w={30} $h={39}><Ico d="M4 6 L17 16 L4 26 Z M18 4 H22 V28 H18 Z" w={26} h={32} /></Btn>
            <Btn $w={30} $h={39}><Ico w={26} h={32}><path d="M20 16 A7.5 7.5 0 1 1 12 8.5" fill="none" stroke="#111" strokeWidth="5" /><path d="M20 16 A7.5 7.5 0 1 1 12 8.5" fill="none" stroke="#ddd" strokeWidth="3" /><path d="M10 3 L17 8.5 L10 13 Z" fill="#ddd" stroke="#111" /></Ico></Btn>
            <Btn $w={30} $h={39}><Ico d="M5 4 H9 V28 H5 Z M10 7 L20 16 L10 25 Z M18 4 H22 V28 H18 Z" w={26} h={32} /></Btn>
            <Btn $w={30} $h={39}><Ico d="M5 5 L23 16 L5 27 Z" w={26} h={32} /></Btn>
            <Btn $w={31} $h={39} $bg="#00a000"><svg width="16" height="16" viewBox="0 0 16 16"><rect x=".5" y=".5" width="15" height="15" fill="#a8d8b0" stroke="#0a0a0a" /></svg></Btn>
            <Btn $w={31} $h={39} $bg="#5e4343" $ml={4}><svg width="18" height="18" viewBox="0 0 18 18"><circle cx="9" cy="9" r="8" fill="#f46c72" /></svg></Btn>
          </TransportRow>
          <StatusStrip>
            <span>Stopped</span>
            <SyncBox />
            <Sprung>Sprung</Sprung>
          </StatusStrip>
        </TransportCol>
        <ButtonStack $w={85} $ml={3}>
          <Btn $h={19}>Internal</Btn>
          <LedBtn $h={19} $mt={2}>Follow Edits<Led $on="#3a2400" /></LedBtn>
          <LedBtn $h={19} $mt={3}>Auto Return<Led $on="#f09a10" /></LedBtn>
        </ButtonStack>
        <ClockPanel $w={142} $ml={5}>
          <ClockDigits $pl={6}>00:12:34:19</ClockDigits>
          <SyncLabel>INT/JACK</SyncLabel>
        </ClockPanel>
        <ClockPanel $w={142} $ml={3}>
          <ClockDigits $pl={5}>755|03|1116</ClockDigits>
          <MeterLine>Tempo&nbsp;<Green>240.0</Green><MeterWord>Meter</MeterWord><Green>4/4</Green></MeterLine>
        </ClockPanel>
        <SelectionPanel>
          <SelTitle $col="1 / 3">Selection</SelTitle>
          <SelTitle $col="6" $pr={8}>Punch</SelTitle>
          <SelLabel $row={2}>Start</SelLabel><SelDash $row={2}>--:--:--:--</SelDash>
          <SelLabel $row={3}>End</SelLabel><SelDash $row={3}>--:--:--:--</SelDash>
          <SelLabel $row={4}>Length</SelLabel><SelDash $row={4}>--:--:--:--</SelDash>
          <PunchCell $row="2 / 3"><Btn $w={27} $h={18} $bg="#5e4343" $c="#a89a9a">In</Btn></PunchCell>
          <PunchVal $row="2 / 3">00:08:02:23</PunchVal>
          <PunchCell $row="3 / 5"><Btn $w={27} $h={18} $bg="#5e4343" $c="#a89a9a">Out</Btn></PunchCell>
          <PunchVal $row="3 / 5">00:08:02:24</PunchVal>
        </SelectionPanel>
        <ButtonStack $w={56} $ml={3}>
          <Btn $h={18} $bg="#5e4646" $c="#8d7f80" $mt={2}>Solo</Btn>
          <Btn $h={19} $bg="#5e4646" $c="#8d7f80" $mt={1}>Audition</Btn>
          <Btn $h={19} $bg="#5e4646" $c="#8d7f80" $mt={2}>Feedback</Btn>
        </ButtonStack>
        <MeterBar $w={14} $ml={4} />
        <MeterBar $w={14} $ml={1} />
        <MeterBar $w={10} $ml={3} />
        <Chev ml={5} />
      </Transport>

      <Body>
        <Strip>
          <StripRow $h={17} $mt={0}>
            <Btn $w={22} $h={17}><svg width="14" height="10" viewBox="0 0 14 10"><path d="M1 0 V10 M13 0 V10 M3 5 H11 M3 5 L6 2 V8 Z M11 5 L8 2 V8 Z" stroke="#888" fill="#888" /></svg></Btn>
            <Swatch />
            <Btn $w={21} $h={17} $ml={1}><svg width="12" height="12" viewBox="0 0 12 12"><path d="M1 1 L11 11 M11 1 L1 11" stroke="#a0a0a0" strokeWidth="1.6" /></svg></Btn>
          </StripRow>
          <StripRow $h={18} $mt={4}><StripBtn $h={18}>Guitar</StripBtn></StripRow>
          <StripRow $h={18} $mt={3}><StripBtn $h={18}>*4*</StripBtn></StripRow>
          <StripRow $h={17} $mt={3}><StripBtn $h={17}>Ø1</StripBtn><StripBtn $h={17}>Ø2</StripBtn></StripRow>
          <ProcBox>
            {['Calf Equalizer 8', 'Calf Compressor', 'Calf Equalizer 5', 'Calf Flanger'].map(p => (
              <Proc key={p}><ProcLed /><ProcText>{p}</ProcText></Proc>
            ))}
            <Proc $fader><ProcLed $small /><ProcText>Fader</ProcText></Proc>
          </ProcBox>
          <PanSvg />
          <StripRow $h={19} $mt={2}><Btn $w={50} $h={19} $bg="#5a6654">Aux</Btn></StripRow>
          <StripRow $h={15} $mt={4} $gap={3}>
            <SmallLedBtn $w={50} $h={15}>Iso<Led $on="#7a0010" /></SmallLedBtn>
            <SmallLedBtn $w={50} $h={15}>Lock<Led $on="#7a0010" /></SmallLedBtn>
          </StripRow>
          <StripRow $h={18} $mt={3} $gap={3}><StripBtn $h={18}>Mute</StripBtn><StripBtn $h={18}>Solo</StripBtn></StripRow>
          <StripRow $h={14} $mt={5} $gap={4}><Gain>-0.0</Gain><Gain>-inf</Gain></StripRow>
          <FaderArea>
            <Fader><FaderFill /></Fader>
            <ScaleSvg />
          </FaderArea>
          <StripRow $h={18} $mt={3} $gap={3}><Btn $w={32} $h={18}>M</Btn><Btn $w={33} $h={18}>Grp</Btn><Btn $w={33} $h={18}>Post</Btn></StripRow>
          <StripRow $h={17} $mt={4}><StripBtn $h={17}>Guitars</StripBtn></StripRow>
          <StripRow $h={17} $mt={4}><StripBtn $h={17}>Comments</StripBtn></StripRow>
        </Strip>

        <Main>
          <ToolBar>
            <Drop $w={40}>Slide<Caret $r={2} /></Drop>
            <Tool $w={39} $ml={3}>Smart</Tool>
            <Tool $w={25} $ml={2} $bg="#00a000"><Pointer size={16} fill="#fff" color="#111" /></Tool>
            <Tool $w={26} $ml={3}><svg width="20" height="14" viewBox="0 0 20 14"><path d="M1 1 V13 M19 1 V13 M2 7 H18 M5 4 L2 7 L5 10 M15 4 L18 7 L15 10" stroke="#eee" strokeWidth="1.5" fill="none" /></svg></Tool>
            <Tool $w={26} $ml={2}><Scissors size={17} color="#fff" /></Tool>
            <Tool $w={24} $ml={3}><svg width="16" height="18" viewBox="0 0 16 18"><circle cx="6" cy="6" r="4.5" fill="#eee" /><path d="M9 9 L14 16" stroke="#eee" strokeWidth="2" /></svg></Tool>
            <Tool $w={26} $ml={3}><svg width="20" height="16" viewBox="0 0 20 16"><path d="M3 11 L10 3 L17 14" stroke="#eee" fill="none" /><rect x="1" y="9" width="4" height="4" fill="#eee" /><rect x="8" y="1" width="4" height="4" fill="#eee" /><rect x="15" y="12" width="4" height="4" fill="#eee" /></svg></Tool>
            <Tool $w={25} $ml={2}><svg width="20" height="18" viewBox="0 0 20 18"><path d="M2 2 H10 V16 H2 Z" fill="#eee" /><path d="M4 9 L8 5 V13 Z" fill="#111" /><path d="M12 4 V14 M14 5 L19 9 L14 13 Z" stroke="#eee" fill="#eee" /></svg></Tool>
            <Tool $w={25} $ml={3}><Volume2 size={17} color="#eee" fill="#eee" /></Tool>
            <Tool $w={26} $ml={3}><Pencil size={15} color="#eee" /></Tool>
            <Tool $w={26} $ml={6}><svg width="12" height="18" viewBox="0 0 12 18"><path d="M5 15 V2 C5 5 10 5 10 8" stroke="#eee" strokeWidth="2" fill="none" /><ellipse cx="3.5" cy="15" rx="3" ry="2.4" fill="#eee" /></svg></Tool>
            <Chev ml={8} />
            <Tool $w={25} $ml={8}><svg width="20" height="20" viewBox="0 0 20 20"><circle cx="9" cy="9" r="7" fill="#ddd" stroke="#111" strokeWidth="2" /><path d="M4 9 H14" stroke="#111" strokeWidth="2.4" /><path d="M14 14 L19 19" stroke="#111" strokeWidth="2.4" /></svg></Tool>
            <Tool $w={26} $ml={2}><svg width="20" height="20" viewBox="0 0 20 20"><circle cx="9" cy="9" r="7" fill="#ddd" stroke="#111" strokeWidth="2" /><path d="M4 9 H14 M9 4 V14" stroke="#111" strokeWidth="2.4" /><path d="M14 14 L19 19" stroke="#111" strokeWidth="2.4" /></svg></Tool>
            <Tool $w={25} $ml={3}><svg width="20" height="20" viewBox="0 0 20 20"><circle cx="9" cy="9" r="7" fill="#ddd" stroke="#111" strokeWidth="2" /><path d="M6 5 H12 V13 H6 Z" fill="none" stroke="#111" strokeWidth="2" /><path d="M14 14 L19 19" stroke="#111" strokeWidth="2.4" /></svg></Tool>
            <Drop $w={54} $ml={3}>Left<Caret /></Drop>
            <Drop $w={39} $ml={2}>*<Caret /></Drop>
            <Tool $w={25} $ml={3}><svg width="16" height="22" viewBox="0 0 16 22"><path d="M3 1 H13 L8 8 Z M3 21 H13 L8 14 Z" fill="#eee" stroke="#111" /><rect x="1" y="9" width="14" height="4" fill="#eee" stroke="#111" /></svg></Tool>
            <Tool $w={25} $ml={4}><svg width="16" height="22" viewBox="0 0 16 22"><rect x="2" y="1" width="12" height="20" fill="#ddd" stroke="#111" /><path d="M4 8 L8 3 L12 8 Z M4 14 L8 19 L12 14 Z" fill="#111" /></svg></Tool>
            <Chev ml={4} />
            <Drop $w={51} $ml={8}>No Grid<Caret $r={3} /></Drop>
            <Drop $w={76} $ml={4} $pl={8}>Beats<Caret /></Drop>
            <Drop $w={54} $ml={4}>Mouse<Caret $r={3} /></Drop>
            <Tool $w={21} $ml={6} $bg="#5e4343"><svg width="10" height="16" viewBox="0 0 10 16"><path d="M8 1 L2 8 L8 15" fill="none" stroke="#eee" strokeWidth="1.8" /></svg></Tool>
            <Tool $w={21} $ml={3} $bg="#5e4343"><svg width="10" height="16" viewBox="0 0 10 16"><path d="M2 1 L8 8 L2 15" fill="none" stroke="#eee" strokeWidth="1.8" /></svg></Tool>
            <ToolClock>00:00:05:00</ToolClock>
            <Chev ml={6} />
          </ToolBar>
          <Editor>
            <Center>
              <RulerRow $h={16}>
                <RulerLabel>Mins:Secs</RulerLabel>
                <RulerBand $bg="#2d2222" $line="#e8e8e8">
                  {majors.map(([x, t]) => <Major key={x} $x={x}><MajorText>{t}</MajorText></Major>)}
                  {minors.map(x => <Minor key={x} $x={x} />)}
                </RulerBand>
              </RulerRow>
              <RulerRow $h={15}>
                <RulerLabel>Range Markers</RulerLabel>
                <RulerBand $bg="#6e7080" $line="#3c3e48">
                  <Marker $x={0} $w={91}>World Ruination</Marker>
                  <Marker $x={152} $w={93} $end>World Ruination</Marker>
                  <Marker $x={247} $w={71}>Witch Blood</Marker>
                  <Marker $x={521} $w={72} $end>Witch Blood</Marker>
                  <Marker $x={590} $w={98} $pl={18}>Phantom Legion</Marker>
                  <Marker $x={926} $w={92} $end>Phantom Legion</Marker>
                </RulerBand>
              </RulerRow>
              <RulerRow $h={14}>
                <RulerLabel>Location Markers</RulerLabel>
                <RulerBand $bg="#878c98" $line="#3c3e48">
                  <Marker $x={0} $w={36}>start</Marker>
                  <Marker $x={986} $w={35} $end>end</Marker>
                </RulerBand>
              </RulerRow>
              <Tracks>
                {rows.map((r, i) => (
                  <TrackRow key={i}>
                    <Gutter />
                    <Head $k={r.k}>
                      {r.k === 'bus' && <>
                        <TrackBtn $w={18}>M</TrackBtn>
                        {r.noS ? <Spacer $w={18} $ml={4} /> : <TrackBtn $w={18} $ml={4}>S</TrackBtn>}
                        <TrackName $ml={r.noS ? 5 : 6}>{r.n}</TrackName>
                        <TrackMeters><MiniMeter /><MiniMeter /></TrackMeters>
                      </>}
                      {r.k === 'audio' && <>
                        <TrackBtn $w={21}><RecDot /></TrackBtn>
                        <TrackBtn $w={21} $ml={3}>M</TrackBtn>
                        <TrackBtn $w={20} $ml={4}>S</TrackBtn>
                        <TrackName $ml={5}>{r.n}</TrackName>
                        <TrackMeters><MiniMeter /><MiniMeter /></TrackMeters>
                      </>}
                      {r.k === 'auto' && <GainSlider><GainFill style={{ width: r.fill }} /></GainSlider>}
                      {r.k === 'sel' && <>
                        <TrackBtn $w={22} $h={23}><svg width="13" height="13" viewBox="0 0 13 13"><path d="M1 1 L12 12 M12 1 L1 12" stroke="#a8a8a8" strokeWidth="1.8" /></svg></TrackBtn>
                        <NameBox />
                      </>}
                    </Head>
                    <Lane $k={r.k}>{r.lane}</Lane>
                  </TrackRow>
                ))}
              </Tracks>
              <SummaryRow>
                <ArrowStack $w={22} $ml={0}>
                  <ArrowBtn><svg width="8" height="12" viewBox="0 0 8 12"><path d="M6 1 L2 6 L6 11" fill="none" stroke="#c0c0c0" strokeWidth="1.5" /></svg></ArrowBtn>
                  <ArrowBtn><svg width="8" height="12" viewBox="0 0 8 12"><path d="M2 1 L6 6 L2 11" fill="none" stroke="#c0c0c0" strokeWidth="1.5" /></svg></ArrowBtn>
                </ArrowStack>
                <SummaryMap />
                <ArrowStack $w={23} $ml={2}>
                  <ArrowBtn><svg width="12" height="8" viewBox="0 0 12 8"><path d="M1 6 L6 2 L11 6" fill="none" stroke="#c0c0c0" strokeWidth="1.5" /></svg></ArrowBtn>
                  <ArrowBtn><svg width="12" height="8" viewBox="0 0 12 8"><path d="M1 2 L6 6 L11 2" fill="none" stroke="#c0c0c0" strokeWidth="1.5" /></svg></ArrowBtn>
                </ArrowStack>
              </SummaryRow>
            </Center>
            <Side>
              <RouteList>
                <RouteHead><HeadName>Name</HeadName><span>V</span><span>A</span><span>I</span><span>R</span><span>M</span></RouteHead>
                {routeNames.map((n, i) => {
                  const odd = i % 2 === 1;
                  return (
                    <RouteRow key={n} $odd={odd}>
                      <RouteName>{n}</RouteName>
                      <CheckCell $odd={odd}>{checkIcon}</CheckCell>
                      <CheckCell $odd={odd}>{checkIcon}</CheckCell>
                      <span />
                      {hasR(i) ? <RDot $odd={odd} /> : <span />}
                      <MPill $on={yellow.includes(n)} />
                    </RouteRow>
                  );
                })}
              </RouteList>
              <Scroll>
                <ScrollEnd><svg width="9" height="6" viewBox="0 0 9 6"><path d="M1 5 L4.5 1.5 L8 5" fill="none" stroke="#8a8a90" strokeWidth="1.2" /></svg></ScrollEnd>
                <ScrollThumb />
                <ScrollRest />
                <ScrollEnd><svg width="9" height="6" viewBox="0 0 9 6"><path d="M1 1 L4.5 4.5 L8 1" fill="none" stroke="#bcbcc0" strokeWidth="1.2" /></svg></ScrollEnd>
              </Scroll>
              <Tabs>
                {tabs.map(([t, h, a]) => <TabItem key={t} $h={h} $active={a}>{t}</TabItem>)}
              </Tabs>
            </Side>
            <Playhead />
            <GreenLine $x={660} $top={45} $h={450} $w={2} />
            <GreenLine $x={661} $top={460} $h={35} $w={2} />
            <GreenLine $x={536} $top={45} $h={416} />
          </Editor>
        </Main>
      </Body>
    </Page>
  );
}
